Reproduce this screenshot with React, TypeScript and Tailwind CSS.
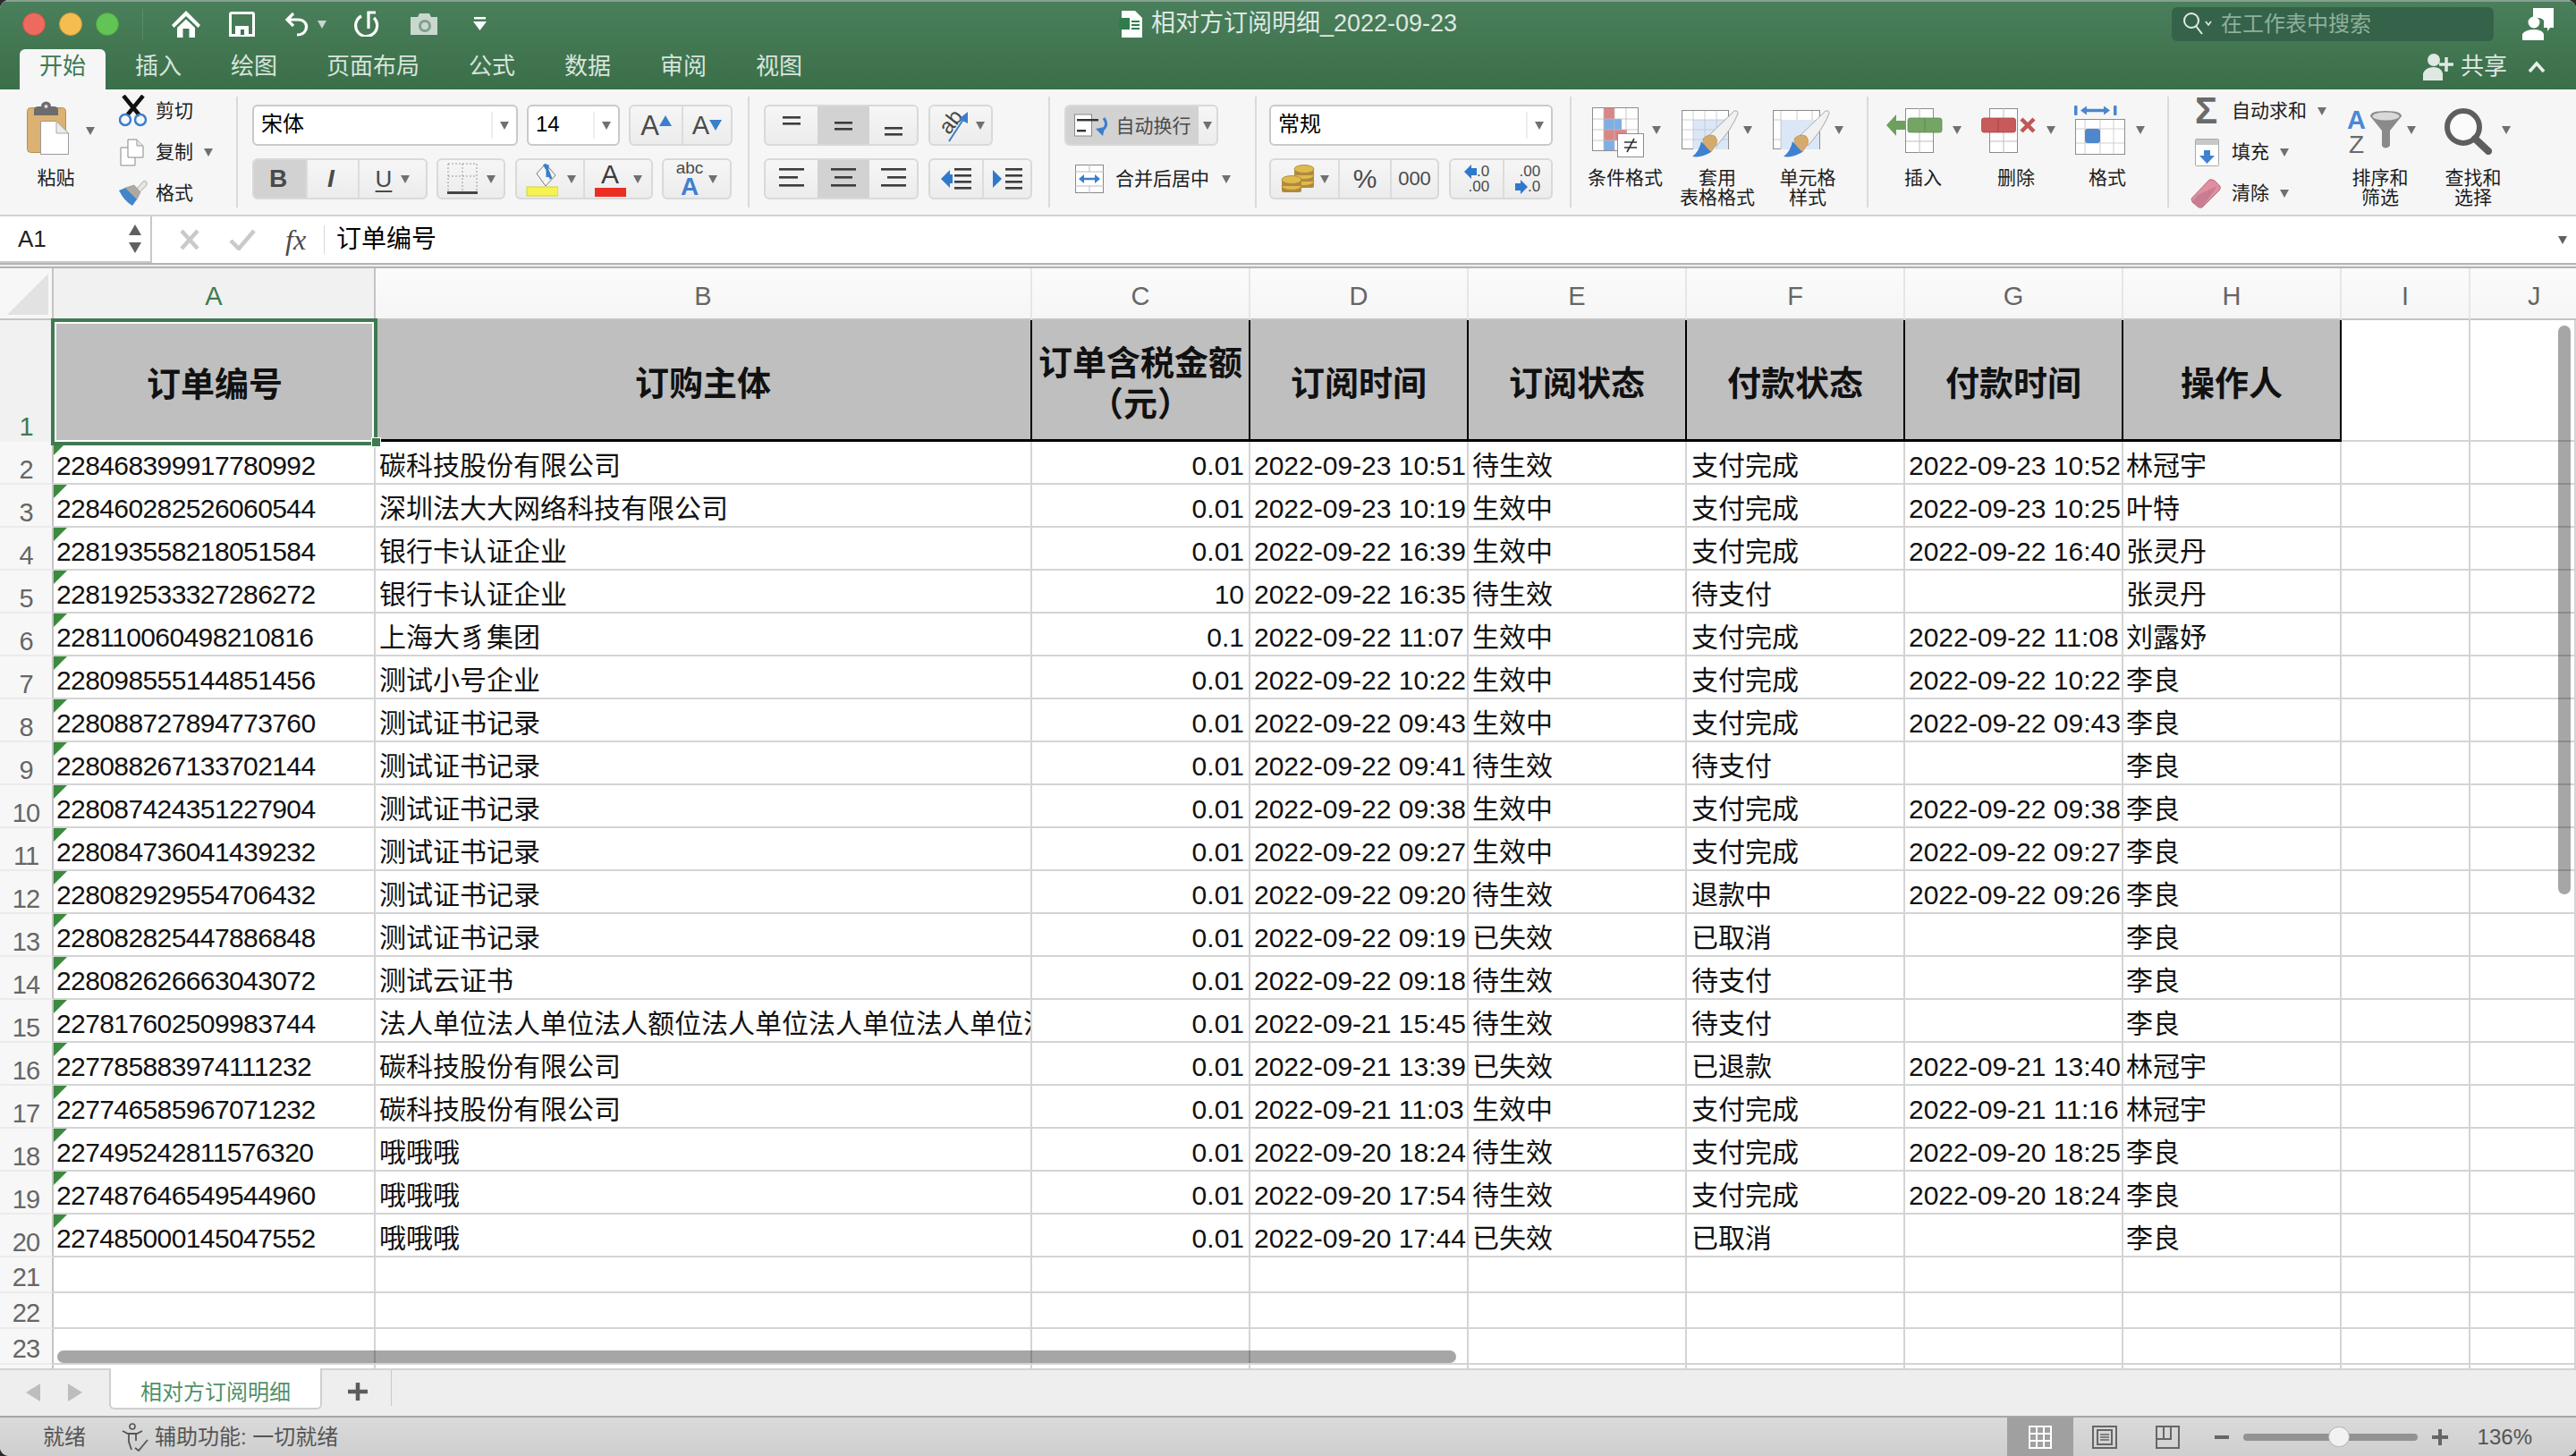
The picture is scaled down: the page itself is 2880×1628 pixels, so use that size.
import type { ReactNode } from 'react'

const ROWS: string[][] = [
  ['228468399917780992', '碳科技股份有限公司', '0.01', '2022-09-23 10:51', '待生效', '支付完成', '2022-09-23 10:52', '林冠宇'],
  ['228460282526060544', '深圳法大大网络科技有限公司', '0.01', '2022-09-23 10:19', '生效中', '支付完成', '2022-09-23 10:25', '叶特'],
  ['228193558218051584', '银行卡认证企业', '0.01', '2022-09-22 16:39', '生效中', '支付完成', '2022-09-22 16:40', '张灵丹'],
  ['228192533327286272', '银行卡认证企业', '10', '2022-09-22 16:35', '待生效', '待支付', '', '张灵丹'],
  ['228110060498210816', '上海大豸集团', '0.1', '2022-09-22 11:07', '生效中', '支付完成', '2022-09-22 11:08', '刘露妤'],
  ['228098555144851456', '测试小号企业', '0.01', '2022-09-22 10:22', '生效中', '支付完成', '2022-09-22 10:22', '李良'],
  ['228088727894773760', '测试证书记录', '0.01', '2022-09-22 09:43', '生效中', '支付完成', '2022-09-22 09:43', '李良'],
  ['228088267133702144', '测试证书记录', '0.01', '2022-09-22 09:41', '待生效', '待支付', '', '李良'],
  ['228087424351227904', '测试证书记录', '0.01', '2022-09-22 09:38', '生效中', '支付完成', '2022-09-22 09:38', '李良'],
  ['228084736041439232', '测试证书记录', '0.01', '2022-09-22 09:27', '生效中', '支付完成', '2022-09-22 09:27', '李良'],
  ['228082929554706432', '测试证书记录', '0.01', '2022-09-22 09:20', '待生效', '退款中', '2022-09-22 09:26', '李良'],
  ['228082825447886848', '测试证书记录', '0.01', '2022-09-22 09:19', '已失效', '已取消', '', '李良'],
  ['228082626663043072', '测试云证书', '0.01', '2022-09-22 09:18', '待生效', '待支付', '', '李良'],
  ['227817602509983744', '法人单位法人单位法人额位法人单位法人单位法人单位法人单位法', '0.01', '2022-09-21 15:45', '待生效', '待支付', '', '李良'],
  ['227785883974111232', '碳科技股份有限公司', '0.01', '2022-09-21 13:39', '已失效', '已退款', '2022-09-21 13:40', '林冠宇'],
  ['227746585967071232', '碳科技股份有限公司', '0.01', '2022-09-21 11:03', '生效中', '支付完成', '2022-09-21 11:16', '林冠宇'],
  ['227495242811576320', '哦哦哦', '0.01', '2022-09-20 18:24', '待生效', '支付完成', '2022-09-20 18:25', '李良'],
  ['227487646549544960', '哦哦哦', '0.01', '2022-09-20 17:54', '待生效', '支付完成', '2022-09-20 18:24', '李良'],
  ['227485000145047552', '哦哦哦', '0.01', '2022-09-20 17:44', '已失效', '已取消', '', '李良'],
]

const TABS = ['插入', '绘图', '页面布局', '公式', '数据', '审阅', '视图']
const COLS = ['B', 'C', 'D', 'E', 'F', 'G', 'H', 'I']
const HEADS = ['订购主体', '订单含税金额（元）', '订阅时间', '订阅状态', '付款状态', '付款时间', '操作人']
const CELL_PAD = ['pl-[3px]', 'pl-[4px]', 'justify-end pr-[5px]', 'pl-[4px]', 'pl-[4px]', 'pl-[5px]', 'pl-[4px]', 'pl-[3px]']
const GRID_LINE = 'border-r-2 border-b-2 border-[#d4d4d4]'

function Caret({ className = '', color = '#707070' }: { className?: string; color?: string }) {
  return (
    <svg width="10" height="10" viewBox="0 0 10 10" className={`shrink-0 ${className}`}>
      <polygon points="0,1 10,1 5,10" fill={color} />
    </svg>
  )
}

function Sep() {
  return <div className="w-[2px] h-[124px] mt-[8px] bg-[#dadada] shrink-0" />
}

function Seg({ className, children }: { className: string; children: ReactNode }) {
  return (
    <div className={`flex h-[46px] rounded-[6px] border-2 border-[#d9d9d9] bg-linear-to-b from-[#f6f6f6] to-[#ececec] overflow-hidden shrink-0 ${className}`}>
      {children}
    </div>
  )
}

function SegCell({ className, children }: { className: string; children?: ReactNode }) {
  return <div className={`flex items-center justify-center h-full leading-none text-[#4a4a4a] ${className}`}>{children}</div>
}

function Field({ className, text }: { className: string; text: string }) {
  return (
    <div className={`flex items-center justify-between h-[46px] pl-[8px] pr-[8px] bg-white rounded-[6px] border-2 border-[#c9c9c9] text-[24px] leading-[30px] text-black shrink-0 ${className}`}>
      <span className="pb-[3px]">{text}</span>
      <div className="flex items-center h-[30px] pl-[8px] border-l-2 border-[#eeeeee]">
        <Caret />
      </div>
    </div>
  )
}

function SmallRow({ icon, text, caret = false, iconClass = 'w-[44px]' }: { icon: ReactNode; text: string; caret?: boolean; iconClass?: string }) {
  return (
    <div className="flex items-center h-[46px] text-[21px] leading-[26px] text-[#1c1c1c]">
      <div className={`flex items-center shrink-0 ${iconClass}`}>{icon}</div>
      {text}
      {caret && <Caret className="ml-[12px]" />}
    </div>
  )
}

function BigButton({ className, rowClass, icon, lines, caretClass = 'ml-[8px] mt-[44px]' }: { className: string; rowClass: string; icon: ReactNode; lines: string[]; caretClass?: string }) {
  return (
    <div className={`flex flex-col shrink-0 ${className}`}>
      <div className={`flex items-start h-[88px] ${rowClass}`}>
        {icon}
        <Caret className={caretClass} />
      </div>
      <div className="flex flex-col items-center text-[21px] leading-[22px] text-[#1c1c1c]">
        {lines.map(l => <span key={l}>{l}</span>)}
      </div>
    </div>
  )
}

function PasteIcon() {
  return (
    <svg width="50" height="62" viewBox="9 7 50 62" className="shrink-0">
      <rect x="10.5" y="15.5" width="43" height="50" rx="4" fill="#dcb272" stroke="#b88d50" />
      <path d="M18 24 V18 Q18 14 23 14 H26 A5.5 5.5 0 0 1 37 14 H40 Q45 14 45 18 V24 Z" fill="#6c6c6c" />
      <circle cx="31.5" cy="14" r="2" fill="#dcdcdc" />
      <path d="M25.5 30.5 H43 L56.5 44 V67.5 H25.5 Z" fill="#fff" stroke="#9a9a9a" />
      <path d="M43 30.5 V44 H56.5 Z" fill="#ececec" stroke="#aaa" />
    </svg>
  )
}

function ScissorsIcon() {
  return (
    <svg width="34" height="36" viewBox="0 0 34 36">
      <path d="M6 1 L24 23 M28 1 L10 23" stroke="#111" strokeWidth="4.5" fill="none" />
      <circle cx="8" cy="28" r="6" fill="none" stroke="#3f7ecb" strokeWidth="2.5" />
      <circle cx="25" cy="28" r="6" fill="none" stroke="#3f7ecb" strokeWidth="2.5" />
    </svg>
  )
}

function CopyIcon() {
  return (
    <svg width="27" height="31" viewBox="0 0 27 31" className="ml-[2px]">
      <path d="M1 10 H17 V30 H1 Z" fill="#fff" stroke="#888" />
      <path d="M9 1 H19 L26 8 V21 H9 Z" fill="#fff" stroke="#888" />
      <path d="M19 1 V8 H26" fill="#e6e6e6" stroke="#999" />
    </svg>
  )
}

function FormatBrushIcon() {
  return (
    <svg width="33" height="30" viewBox="0 0 33 30">
      <path d="M20 11 L28 2 Q31 0 32 3 Q33 6 30 8 L23 15 Z" fill="#e6e6e6" stroke="#aaa" />
      <path d="M8 9 L18 6 L25 14 L21 22 Z" fill="#aeaaa3" stroke="#8f8c86" strokeWidth="0.6" />
      <path d="M1 12 L8 9 L21 22 L16 29 Q7 24 1 12 Z" fill="#4285c9" />
    </svg>
  )
}

function AlignLines({ y, x = [[1, 29], [1, 23], [1, 29]] }: { y: number[]; x?: number[][] }) {
  return (
    <svg width="30" height="36" viewBox="0 0 30 36">
      {y.map((v, i) => (
        <rect key={v} x={x[i][0]} y={v} width={x[i][1] - x[i][0]} height="2.6" fill="#3c3c3c" />
      ))}
    </svg>
  )
}

function IndentIcon({ dir }: { dir: 'l' | 'r' }) {
  return (
    <svg width="36" height="32" viewBox="0 0 36 32">
      <polygon points={dir === 'l' ? '1,16 11,6 11,26' : '12,16 2,6 2,26'} fill="#2f79cd" />
      <rect x={dir === 'l' ? 9 : 2} y="11" width="5" height="10" fill="#2f79cd" />
      <rect x="16" y="4" width="19" height="2.6" fill="#3c3c3c" />
      <rect x="16" y="11" width="19" height="2.6" fill="#3c3c3c" />
      <rect x="16" y="18" width="19" height="2.6" fill="#3c3c3c" />
      <rect x="16" y="25" width="19" height="2.6" fill="#3c3c3c" />
    </svg>
  )
}

function WrapIcon() {
  return (
    <svg width="40" height="26" viewBox="0 0 40 26">
      <rect x="0.5" y="1" width="19" height="24" fill="#fff" stroke="#888" />
      <rect x="3" y="6" width="24" height="2.4" fill="#333" />
      <rect x="3" y="18" width="10" height="2.4" fill="#333" />
      <path d="M33 5 Q39 13 31 19" fill="none" stroke="#3a7fcb" strokeWidth="3" />
      <polygon points="32,25 24,17 34,15" fill="#3a7fcb" />
    </svg>
  )
}

function MergeIcon() {
  return (
    <svg width="32" height="32" viewBox="0 0 32 32">
      <rect x="0.5" y="0.5" width="31" height="31" fill="#fff" stroke="#888" />
      <path d="M0 8 H32 M0 24 H32 M16 0 V8 M16 24 V32" stroke="#bbb" />
      <path d="M6 16 H26" stroke="#3a7fcb" strokeWidth="2.5" />
      <polygon points="4,16 10,11 10,21" fill="#3a7fcb" />
      <polygon points="28,16 22,11 22,21" fill="#3a7fcb" />
    </svg>
  )
}

function CoinsIcon() {
  const coin = (x: number, y: number) => (
    <g key={`${x}${y}`}>
      <rect x={x} y={y} width="22" height="7" rx="2" fill="#b08a3c" />
      <ellipse cx={x + 11} cy={y} rx="11" ry="4.5" fill="#e0b94f" stroke="#a9842f" strokeWidth="0.8" />
    </g>
  )
  return (
    <svg width="38" height="32" viewBox="0 0 38 32">
      {coin(15, 19)}{coin(15, 12)}{coin(15, 5)}
      {coin(1, 24)}{coin(1, 17)}
    </svg>
  )
}

function CondFormatIcon() {
  return (
    <svg width="58" height="56" viewBox="0 0 58 56" className="shrink-0">
      <rect x="0.5" y="0.5" width="51" height="48" fill="#fff" stroke="#8c8c8c" />
      <rect x="13" y="1" width="12" height="12" fill="#dc8585" />
      <rect x="13" y="13" width="20" height="12" fill="#7eaee6" />
      <rect x="13" y="25" width="26" height="12" fill="#dc8585" />
      <rect x="13" y="37" width="12" height="11" fill="#7eaee6" />
      <path d="M13 1 V48 M25 1 V48 M38 1 V48 M1 13 H51 M1 25 H51 M1 37 H51" stroke="#bdbdbd" strokeWidth="0.8" />
      <rect x="28.5" y="29.5" width="29" height="26" fill="#fff" stroke="#8c8c8c" />
      <path d="M36 39 H50 M36 45 H50 M39 50 L47 35" stroke="#333" strokeWidth="1.6" />
    </svg>
  )
}

function TableBrushIcon({ wide = false }: { wide?: boolean }) {
  return (
    <svg width="64" height="54" viewBox="0 0 64 54" className="shrink-0">
      <rect x="0.5" y="0.5" width="52" height="43" fill="#fff" stroke="#8c8c8c" />
      <rect x={wide ? 9 : 13} y={wide ? 11 : 11} width={wide ? 43 : 39} height="33" fill="#dbe7f6" />
      {wide ? (
        <path d="M9 1 V43 M1 11 H9 M1 33 H9 M44 1 V11 M27 1 V11" stroke="#bdbdbd" strokeWidth="0.8" />
      ) : (
        <path d="M13 1 V43 M26 1 V43 M39 1 V43 M1 11 H52 M1 22 H52 M1 33 H52" stroke="#bdc6d2" strokeWidth="0.8" />
      )}
      <path d="M29 30 L59 1 Q63 0 63 4 Q56 22 39 40 Z" fill="#f1f1f1" stroke="#a8a8a8" />
      <path d="M24 32 Q30 26 37 29 Q41 33 39 38 L33 47 Q24 44 24 32 Z" fill="#d6aa6c" stroke="#b18647" strokeWidth="0.6" />
      <path d="M22 35 Q28 42 33 47 Q22 54 12 52 Q20 46 22 35 Z" fill="#3f80d0" />
    </svg>
  )
}

function InsertIcon() {
  return (
    <svg width="63" height="51" viewBox="0 0 63 51" className="shrink-0">
      <rect x="21.5" y="0.5" width="31" height="49" fill="#fff" stroke="#8c8c8c" />
      <path d="M37 0 V50 M22 37 H52" stroke="#bdbdbd" />
      <rect x="24" y="11" width="38" height="16" rx="2.5" fill="#74a566" stroke="#5d8c52" strokeWidth="0.8" />
      <path d="M43 11 V27" stroke="#5d8c52" />
      <polygon points="0,19 11,7 11,14 21,14 21,24 11,24 11,31" fill="#6d9f5f" />
    </svg>
  )
}

function DeleteIcon() {
  return (
    <svg width="62" height="51" viewBox="0 0 62 51" className="shrink-0">
      <rect x="9.5" y="0.5" width="31" height="49" fill="#fff" stroke="#8c8c8c" />
      <path d="M25 0 V50 M10 37 H40" stroke="#bdbdbd" />
      <rect x="0.5" y="11" width="38" height="16" rx="2.5" fill="#c85a5a" stroke="#a84848" strokeWidth="0.8" />
      <path d="M19 11 V27" stroke="#a84848" />
      <path d="M45 12 L59 26 M59 12 L45 26" stroke="#c15656" strokeWidth="4.5" />
    </svg>
  )
}

function CellFormatIcon() {
  return (
    <svg width="58" height="55" viewBox="0 0 58 55" className="shrink-0">
      <rect x="0" y="0" width="3.5" height="11" rx="1" fill="#4a86cc" />
      <rect x="44" y="0" width="3.5" height="11" rx="1" fill="#4a86cc" />
      <path d="M9 5.5 H38" stroke="#4a86cc" strokeWidth="3.5" />
      <polygon points="7,5.5 14,0.5 14,10.5" fill="#4a86cc" />
      <polygon points="40,5.5 33,0.5 33,10.5" fill="#4a86cc" />
      <rect x="1.5" y="15.5" width="55" height="39" fill="#fff" stroke="#8c8c8c" />
      <path d="M12 16 V54 M29 16 V54 M44 16 V54 M2 26 H56 M2 42 H56" stroke="#cfcfcf" />
      <rect x="12" y="26" width="17" height="16" rx="3" fill="#4f87ce" />
    </svg>
  )
}

function SumIcon() {
  return (
    <svg width="30" height="34" viewBox="0 0 30 34" className="overflow-visible">
      <text x="0" y="31" fontSize="42" fontFamily="Liberation Sans" fontWeight="700" fill="#6a6a6a">Σ</text>
    </svg>
  )
}

function FillIcon() {
  return (
    <svg width="27" height="31" viewBox="0 0 27 31" className="ml-[5px]">
      <rect x="0.5" y="0.5" width="26" height="30" rx="1" fill="#fff" stroke="#a8a8a8" />
      <rect x="1" y="1" width="25" height="6" fill="#c8c8c8" />
      <rect x="10" y="13" width="7" height="7" fill="#3f80d0" />
      <polygon points="5,19 22,19 13.5,28" fill="#3f80d0" />
    </svg>
  )
}

function EraserIcon() {
  return (
    <svg width="34" height="33" viewBox="0 0 34 33">
      <path d="M1 22 L21 1 Q24 0 27 2 L33 8 Q34 11 32 13 L13 32 Q10 33 8 31 L2 26 Z" fill="#e08ea2" stroke="#a9596d" strokeWidth="0.8" />
      <path d="M8 18 L30 8 L13 32 L8 31 L2 26 Z" fill="#c97d91" />
    </svg>
  )
}

function SortIcon() {
  return (
    <svg width="62" height="50" viewBox="0 0 62 50" className="shrink-0 overflow-visible">
      <text x="0" y="22" fontSize="29" fontFamily="Liberation Sans" fontWeight="700" fill="#4c87d6">A</text>
      <text x="2" y="49" fontSize="28" fontFamily="Liberation Sans" fill="#6a6a6a">Z</text>
      <path d="M26 8 Q26 2 43 2 Q61 2 61 8 L48 24 V41 Q43 46 39 41 V24 Z" fill="#8a8a8a" />
      <ellipse cx="43.5" cy="8" rx="15" ry="4.5" fill="#d9d9d9" />
    </svg>
  )
}

function SearchBigIcon() {
  return (
    <svg width="54" height="53" viewBox="0 0 54 53" className="shrink-0">
      <circle cx="22" cy="22" r="18" fill="#fff" fillOpacity="0.6" stroke="#5e5e5e" strokeWidth="6" />
      <path d="M35 35 L50 49" stroke="#5e5e5e" strokeWidth="8" strokeLinecap="round" />
    </svg>
  )
}

function TitleBar() {
  return (
    <div className="h-[100px] shrink-0 flex flex-col bg-linear-to-b from-[#4a7f5b] to-[#3a6f49] border-t-2 border-[#86a190]">
      <div className="grid grid-cols-[1fr_auto_1fr] h-[54px] pb-[4px]">
        <div className="flex items-center pl-[25px]">
          <div className="w-[26px] h-[26px] rounded-full bg-[#ee6a5f] border border-[#c9544b]" />
          <div className="w-[26px] h-[26px] rounded-full bg-[#f5bd4f] border border-[#d19e3a] ml-[15px]" />
          <div className="w-[26px] h-[26px] rounded-full bg-[#61c454] border border-[#4ea643] ml-[15px]" />
          <div className="w-[1px] h-[34px] bg-[#5b8a6b] ml-[26px]" />
          <svg width="32" height="30" viewBox="0 0 32 30" className="ml-[32px]">
            <path d="M16 0 L32 16 L29.5 19 L16 6 L2.5 19 L0 16 Z M6 19 L16 9.5 L26 19 V30 H19.5 V20 H12.5 V30 H6 Z" fill="#fff" />
          </svg>
          <svg width="29" height="28" viewBox="0 0 29 28" className="ml-[32px]">
            <path d="M3 1.5 H26 Q27.5 1.5 27.5 3 V26.5 H1.5 V3 Q1.5 1.5 3 1.5 Z" fill="none" stroke="#fff" strokeWidth="3" />
            <rect x="7" y="16" width="15" height="11" fill="#fff" />
            <rect x="13" y="20" width="4" height="6" fill="#3f7450" />
          </svg>
          <svg width="29" height="28" viewBox="0 0 29 28" className="ml-[33px]">
            <path d="M10 2 L3 9 L10 16 M3 9 H15 C23 9 26 15 24 20 C22 25 18 26 14 26" fill="none" stroke="#fff" strokeWidth="3.2" />
          </svg>
          <Caret className="ml-[8px]" color="#c9d8ce" />
          <svg width="29" height="29" viewBox="0 0 29 29" className="ml-[30px]">
            <path d="M9 6 A12 12 0 1 0 23 8" fill="none" stroke="#fff" strokeWidth="3.2" />
            <path d="M17 20 V2 H25" fill="none" stroke="#fff" strokeWidth="3.2" />
          </svg>
          <svg width="32" height="24" viewBox="0 0 32 24" className="ml-[34px]">
            <path d="M1 4 H9 L11 0 H22 L24 4 H31 V24 H1 Z" fill="#c9d8ce" />
            <circle cx="17" cy="14" r="7" fill="#7f9f8b" />
            <circle cx="17" cy="14" r="4" fill="#c9d8ce" />
          </svg>
          <svg width="15" height="15" viewBox="0 0 15 15" className="ml-[39px]">
            <rect x="1" y="0" width="13" height="2.5" fill="#fff" />
            <polygon points="0,5 15,5 7.5,15" fill="#fff" />
          </svg>
        </div>
        <div className="flex items-center text-[27px] text-[#dfe8e2]">
          <svg width="26" height="30" viewBox="0 0 26 30" className="mr-[10px]">
            <path d="M3 0 H18 L26 8 V30 H3 Z" fill="#fff" />
            <rect x="0" y="8" width="12" height="13" fill="#2f7d4c" />
            <path d="M14 12 H23 M14 16 H23 M14 20 H23" stroke="#2f7d4c" strokeWidth="2" />
          </svg>
          相对方订阅明细_2022-09-23
        </div>
        <div className="flex items-center justify-end">
          <div className="flex items-center w-[360px] h-[38px] rounded-[6px] bg-[#35634a] pl-[12px] text-[24px] text-[#8fb09b]">
            <svg width="34" height="28" viewBox="0 0 34 28" className="mr-[9px]">
              <circle cx="10" cy="10" r="8" fill="none" stroke="#e4ece7" strokeWidth="2" />
              <path d="M15 16 L22 25" stroke="#e4ece7" strokeWidth="2" />
              <path d="M26 11 L29 15 L32 11" fill="none" stroke="#e4ece7" strokeWidth="1.6" />
            </svg>
            在工作表中搜索
          </div>
          <svg width="36" height="36" viewBox="0 0 36 36" className="ml-[32px] mr-[24px]">
            <path d="M12 0 H35 V22 L31 22 L28 26 V22 H24 V14 Q21 10 12 11 Z" fill="#fff" />
            <circle cx="13" cy="16" r="6.5" fill="#fff" />
            <path d="M0 36 V29 Q4 24 13 24 Q22 24 24 29 V36 Z" fill="#fff" />
          </svg>
        </div>
      </div>
      <div className="flex justify-between flex-1">
        <div className="flex gap-[11px] pl-[22px] text-[26px] text-[#d8e4dc]">
          <div className="flex items-center pb-[6px] px-[22px] rounded-t-[6px] bg-[#f6f6f6] text-[#3f7a52]">开始</div>
          {TABS.map(t => <div key={t} className="flex items-center pb-[6px] px-[22px]">{t}</div>)}
        </div>
        <div className="flex items-center pb-[6px] text-[26px] text-[#dfe8e2] pr-[34px]">
          <svg width="34" height="30" viewBox="0 0 34 30" className="mr-[8px]">
            <circle cx="12" cy="7" r="7" fill="#dfe8e2" />
            <path d="M0 30 V22 Q3 15 12 15 Q20 15 22 22 V30 Z" fill="#dfe8e2" />
            <path d="M26 4 V20 M18 12 H34" stroke="#dfe8e2" strokeWidth="3.5" />
          </svg>
          共享
          <svg width="20" height="14" viewBox="0 0 20 14" className="ml-[23px]">
            <path d="M2 12 L10 3 L18 12" fill="none" stroke="#e8efea" strokeWidth="3.5" />
          </svg>
        </div>
      </div>
    </div>
  )
}

function Ribbon() {
  return (
    <div className="h-[142px] shrink-0 flex bg-[#f6f6f6] border-b-2 border-[#d2d2d2]">
      <div className="w-[264px] flex shrink-0">
        <BigButton
          className="w-[125px]"
          rowClass="pl-[29px] pt-[12px]"
          icon={<PasteIcon />}
          caretClass="ml-[17px] mt-[29px]"
          lines={['粘贴']}
        />
        <div className="flex flex-col pt-[1px] pl-[7px]">
          <SmallRow icon={<ScissorsIcon />} text="剪切" iconClass="w-[42px]" />
          <SmallRow icon={<CopyIcon />} text="复制" caret iconClass="w-[42px]" />
          <SmallRow icon={<FormatBrushIcon />} text="格式" iconClass="w-[42px]" />
        </div>
      </div>
      <Sep />

      <div className="w-[570px] shrink-0 flex flex-col gap-[14px] pt-[17px] pl-[16px]">
        <div className="flex gap-[10px]">
          <Field className="w-[297px]" text="宋体" />
          <Field className="w-[104px]" text="14" />
          <Seg className="w-[116px]">
            <SegCell className="w-[57px] text-[31px]">
              A<svg width="14" height="12" viewBox="0 0 14 12" className="mb-[10px]"><polygon points="7,0 14,12 0,12" fill="#3a7fcb" /></svg>
            </SegCell>
            <SegCell className="flex-1 border-l-2 border-[#dcdcdc] text-[29px]">
              A<svg width="14" height="12" viewBox="0 0 14 12"><polygon points="0,0 14,0 7,12" fill="#3a7fcb" /></svg>
            </SegCell>
          </Seg>
        </div>
        <div className="flex">
          <Seg className="w-[196px]">
            <SegCell className="w-[58px] pr-[4px] bg-[#d2d2d2] text-[28px] font-bold">B</SegCell>
            <SegCell className="w-[58px] pr-[4px] border-l-2 border-[#dcdcdc] text-[28px] italic font-bold">I</SegCell>
            <SegCell className="flex-1 border-l-2 border-[#dcdcdc] text-[26px] gap-[10px]">
              <span className="underline underline-offset-[4px]">U</span>
              <Caret />
            </SegCell>
          </Seg>
          <Seg className="w-[77px] ml-[10px]">
            <SegCell className="w-full gap-[10px]">
              <svg width="34" height="38" viewBox="0 0 34 38">
                <path d="M1 2 H33 M1 16 H33 M1 2 V32 M33 2 V32 M17 2 V32" stroke="#9a9a9a" strokeDasharray="2 2" fill="none" />
                <rect x="0" y="33" width="34" height="3" fill="#444" />
              </svg>
              <Caret />
            </SegCell>
          </Seg>
          <Seg className="w-[154px] ml-[11px]">
            <SegCell className="w-[74px] gap-[10px] pl-[2px]">
              <svg width="36" height="40" viewBox="0 0 36 40">
                <path d="M12 14 L22 3 L33 16 L22 28 Z" fill="#f5f5f5" stroke="#7a7a7a" />
                <path d="M24 4 V18 M20 4 Q24 8 28 20" stroke="#3a7fcb" strokeWidth="3" fill="none" />
                <rect x="1" y="29" width="35" height="10" fill="#f6f24f" stroke="#d4cf3a" />
              </svg>
              <Caret />
            </SegCell>
            <SegCell className="flex-1 border-l-2 border-[#dcdcdc] gap-[8px]">
              <div className="flex flex-col items-center text-[30px] leading-[30px] text-[#3c3c3c]">
                A
                <div className="w-[35px] h-[10px] bg-[#ea2e21]" />
              </div>
              <Caret />
            </SegCell>
          </Seg>
          <Seg className="w-[78px] ml-[10px]">
            <SegCell className="w-full gap-[6px]">
              <div className="flex flex-col items-center text-[19px] leading-[18px]">
                abc
                <span className="text-[28px] leading-[24px] font-bold text-[#3f80d0]">A</span>
              </div>
              <Caret />
            </SegCell>
          </Seg>
        </div>
      </div>
      <Sep />

      <div className="w-[334px] shrink-0 flex flex-col gap-[14px] pt-[17px] pl-[16px]">
        <div className="flex">
          <Seg className="w-[173px]">
            <SegCell className="w-[58px]"><AlignLines y={[8, 15]} x={[[5, 25], [5, 25]]} /></SegCell>
            <SegCell className="w-[58px] bg-[#d2d2d2]"><AlignLines y={[14, 21]} x={[[5, 25], [5, 25]]} /></SegCell>
            <SegCell className="flex-1"><AlignLines y={[20, 27]} x={[[5, 25], [5, 25]]} /></SegCell>
          </Seg>
          <Seg className="w-[72px] ml-[11px]">
            <SegCell className="w-full gap-[6px]">
              <svg width="38" height="40" viewBox="0 0 38 40" className="overflow-visible">
                <text x="5" y="27" fontSize="24" fontFamily="Liberation Sans" fill="#444" transform="rotate(-52 14 20)">ab</text>
                <path d="M14 38 L31 12" stroke="#3a7fcb" strokeWidth="2" />
                <polygon points="35,5 35,18 25,13" fill="#3a7fcb" />
              </svg>
              <Caret />
            </SegCell>
          </Seg>
        </div>
        <div className="flex">
          <Seg className="w-[173px]">
            <SegCell className="w-[58px]"><AlignLines y={[6, 15, 24]} x={[[1, 29], [1, 22], [1, 29]]} /></SegCell>
            <SegCell className="w-[58px] bg-[#d2d2d2]"><AlignLines y={[6, 15, 24]} x={[[1, 29], [5, 25], [1, 29]]} /></SegCell>
            <SegCell className="flex-1"><AlignLines y={[6, 15, 24]} x={[[1, 29], [8, 29], [1, 29]]} /></SegCell>
          </Seg>
          <Seg className="w-[116px] ml-[11px]">
            <SegCell className="w-[58px]"><IndentIcon dir="l" /></SegCell>
            <SegCell className="flex-1 border-l-2 border-[#dcdcdc]"><IndentIcon dir="r" /></SegCell>
          </Seg>
        </div>
      </div>
      <Sep />

      <div className="w-[229px] shrink-0 flex flex-col gap-[14px] pt-[17px] pl-[16px]">
        <Seg className="w-[172px]">
          <SegCell className="w-[148px] bg-[#d2d2d2] gap-[7px] text-[21px] text-[#1c1c1c]">
            <WrapIcon />
            自动换行
          </SegCell>
          <SegCell className="flex-1"><Caret /></SegCell>
        </Seg>
        <div className="flex items-center h-[46px] pl-[12px] text-[21px] leading-[26px] text-[#1c1c1c]">
          <MergeIcon />
          <span className="ml-[13px]">合并后居中</span>
          <Caret className="ml-[14px]" />
        </div>
      </div>
      <Sep />

      <div className="w-[350px] shrink-0 flex flex-col gap-[14px] pt-[17px] pl-[14px]">
        <Field className="w-[317px]" text="常规" />
        <div className="flex">
          <Seg className="w-[190px]">
            <SegCell className="w-[75px] gap-[6px]"><CoinsIcon /><Caret /></SegCell>
            <SegCell className="w-[58px] border-l-2 border-[#dcdcdc] text-[30px]">%</SegCell>
            <SegCell className="flex-1 border-l-2 border-[#dcdcdc] text-[22px]">000</SegCell>
          </Seg>
          <Seg className="w-[116px] ml-[11px]">
            <SegCell className="w-[58px] text-[17px]">
              <div className="flex flex-col items-end leading-[17px]">
                <div className="flex items-center">
                  <svg width="14" height="16" viewBox="0 0 14 16"><polygon points="0,8 8,0 8,4 14,4 14,12 8,12 8,16" fill="#2f79cd" /></svg>
                  .0
                </div>
                .00
              </div>
            </SegCell>
            <SegCell className="flex-1 border-l-2 border-[#dcdcdc] text-[17px]">
              <div className="flex flex-col items-end leading-[17px]">
                .00
                <div className="flex items-center">
                  <svg width="14" height="16" viewBox="0 0 14 16"><polygon points="14,8 6,0 6,4 0,4 0,12 6,12 6,16" fill="#2f79cd" /></svg>
                  .0
                </div>
              </div>
            </SegCell>
          </Seg>
        </div>
      </div>
      <Sep />

      <div className="w-[330px] shrink-0 flex pl-[13px]">
        <BigButton className="w-[94px]" rowClass="pl-[10px] pt-[20px]" icon={<CondFormatIcon />} lines={['条件格式']} caretClass="ml-[9px] mt-[20px]" />
        <BigButton className="w-[100px] ml-[6px]" rowClass="pl-[10px] pt-[23px]" icon={<TableBrushIcon />} lines={['套用', '表格格式']} caretClass="ml-[5px] mt-[17px]" />
        <BigButton className="w-[100px] ml-[1px]" rowClass="pl-[11px] pt-[23px]" icon={<TableBrushIcon wide />} lines={['单元格', '样式']} caretClass="ml-[5px] mt-[17px]" />
      </div>
      <Sep />

      <div className="w-[334px] shrink-0 flex pl-[15px]">
        <BigButton className="w-[92px]" rowClass="pl-[5px] pt-[21px]" icon={<InsertIcon />} lines={['插入']} caretClass="ml-[11px] mt-[19px]" />
        <BigButton className="w-[92px] ml-[12px]" rowClass="pl-[7px] pt-[21px]" icon={<DeleteIcon />} lines={['删除']} caretClass="ml-[11px] mt-[19px]" />
        <BigButton className="w-[92px] ml-[10px]" rowClass="pl-[9px] pt-[18px]" icon={<CellFormatIcon />} lines={['格式']} caretClass="ml-[11px] mt-[22px]" />
      </div>
      <Sep />

      <div className="flex-1 flex pl-[24px]">
        <div className="w-[168px] shrink-0 flex flex-col pt-[1px]">
          <SmallRow icon={<SumIcon />} text="自动求和" caret iconClass="w-[46px] pl-[5px]" />
          <SmallRow icon={<FillIcon />} text="填充" caret iconClass="w-[46px]" />
          <SmallRow icon={<EraserIcon />} text="清除" caret iconClass="w-[46px]" />
        </div>
        <BigButton className="w-[92px] ml-[-2px]" rowClass="pl-[9px] pt-[22px]" icon={<SortIcon />} lines={['排序和', '筛选']} caretClass="ml-[5px] mt-[18px]" />
        <BigButton className="w-[92px] ml-[12px]" rowClass="pl-[13px] pt-[20px]" icon={<SearchBigIcon />} lines={['查找和', '选择']} caretClass="ml-[11px] mt-[20px]" />
      </div>
    </div>
  )
}

function FormulaBar() {
  return (
    <div className="h-[58px] shrink-0 flex flex-col bg-white">
      <div className="flex items-center h-[52px]">
        <div className="flex items-center justify-between w-[170px] h-full pl-[20px] pr-[10px] border-r-2 border-[#c8c8c8] border-b-2 text-[26px] text-[#222]">
          A1
          <div className="flex flex-col gap-[8px]">
            <svg width="14" height="12" viewBox="0 0 14 12"><polygon points="7,0 14,12 0,12" fill="#606060" /></svg>
            <svg width="14" height="12" viewBox="0 0 14 12"><polygon points="0,0 14,0 7,12" fill="#606060" /></svg>
          </div>
        </div>
        <svg width="24" height="24" viewBox="0 0 24 24" className="ml-[30px]">
          <path d="M3 2 L21 22 M21 2 L3 22" stroke="#c9c9c9" strokeWidth="4.5" />
        </svg>
        <svg width="30" height="24" viewBox="0 0 30 24" className="ml-[32px]">
          <path d="M2 13 L11 22 L28 2" fill="none" stroke="#c9c9c9" strokeWidth="4.5" />
        </svg>
        <span className="ml-[33px] w-[43px] text-[32px] italic font-['Liberation_Serif',serif] text-[#4a4a4a]">fx</span>
        <div className="w-[1px] h-[32px] bg-[#d8d8d8]" />
        <span className="ml-[13px] text-[28px] text-black">订单编号</span>
        <Caret className="ml-auto mr-[10px]" color="#606060" />
      </div>
      <div className="h-[6px] border-y-2 border-[#b4b4b4] bg-[#ececec]" />
    </div>
  )
}

function Grid() {
  return (
    <div className="relative flex-1 min-h-0 overflow-hidden bg-white">
      <div className="grid grid-cols-[60px_360px_734px_244px_244px_244px_244px_244px_244px_144px_118px] grid-rows-[58px_136px_repeat(19,48px)_repeat(4,40px)] text-[30px] text-[#111]">
        <div className="flex items-end justify-end bg-[#f7f7f7] border-r-2 border-b-2 border-[#c4c4c4] p-[4px]">
          <div className="w-[46px] h-[46px] bg-[#e2e2e2] [clip-path:polygon(100%_0,100%_100%,0_100%)]" />
        </div>
        <div className="flex items-center justify-center pt-[8px] bg-[#f1f1f1] border-r-2 border-b-2 border-[#c4c4c4] text-[29px] text-[#3f7a52]">A</div>
        {COLS.map(c => (
          <div key={c} className="flex items-center justify-center pt-[8px] bg-linear-to-b from-[#fbfbfb] to-[#f6f6f6] border-r-2 border-[#e6e6e6] border-b-2 border-b-[#c4c4c4] text-[29px] text-[#666]">{c}</div>
        ))}
        <div className="flex items-center justify-start pt-[8px] pl-[64px] bg-linear-to-b from-[#fbfbfb] to-[#f6f6f6] border-b-2 border-b-[#c4c4c4] text-[29px] text-[#666]">J</div>

        <div className="flex items-end justify-center pb-[2px] bg-[#f1f1f1] border-r-2 border-[#c4c4c4] text-[29px] leading-[30px] tracking-[-1px] text-[#3f7a52]">1</div>
        <div className="relative flex items-center justify-center pt-[8px] bg-[#bfbfbf] text-[38px] font-bold">
          订单编号
          <div className="absolute -left-[3px] -top-[2px] -right-[2px] -bottom-[4px] border-[4px] border-[#3f7a52] z-10">
            <div className="w-full h-full border-2 border-white" />
          </div>
          <div className="absolute -right-[6px] -bottom-[6px] w-[11px] h-[11px] bg-[#3f7a52] border border-white z-20" />
        </div>
        {HEADS.map(h => (
          <div key={h} className="flex items-center justify-center pt-[8px] text-center bg-[#bfbfbf] border-r-2 border-b-[3px] border-r-black border-b-black text-[38px] leading-[46px] font-bold">
            {h === '订单含税金额（元）' ? (
              <span className="whitespace-nowrap">订单含税金额<br />（元）</span>
            ) : h}
          </div>
        ))}
        <div className={GRID_LINE} />
        <div className={GRID_LINE} />

        {ROWS.map((row, i) => (
          <div key={row[0]} className="contents">
            <div className="flex items-center justify-center pt-[16px] bg-[#f7f7f7] border-r-2 border-r-[#c4c4c4] border-b-2 border-b-[#ebebeb] text-[29px] leading-[30px] tracking-[-1px] text-[#666]">{i + 2}</div>
            {row.map((text, j) => (
              <div key={j} className={`relative flex items-center pt-[8px] overflow-hidden whitespace-nowrap leading-[34px] ${GRID_LINE} ${CELL_PAD[j]}`}>
                {j === 0 && (
                  <svg width="15" height="15" viewBox="0 0 15 15" className="absolute left-0 top-0">
                    <polygon points="0,0 15,0 0,15" fill="#3b8a3e" />
                  </svg>
                )}
                <span className={j === 0 ? 'tracking-[-0.6px]' : ''}>{text}</span>
              </div>
            ))}
            <div className={GRID_LINE} />
            <div className={GRID_LINE} />
          </div>
        ))}

        {[21, 22, 23, 24].map(n => (
          <div key={n} className="contents">
            <div className="flex items-center justify-center pt-[6px] bg-[#f7f7f7] border-r-2 border-r-[#c4c4c4] border-b-2 border-b-[#ebebeb] text-[29px] leading-[30px] tracking-[-1px] text-[#666]">{n === 24 ? '' : n}</div>
            {Array.from({ length: 10 }).map((_, j) => <div key={j} className={GRID_LINE} />)}
          </div>
        ))}
      </div>

      <div className="absolute left-[64px] top-[1210px] w-[1564px] h-[14px] rounded-full bg-black/35" />
      <div className="absolute left-[2860px] top-[64px] w-[14px] h-[636px] rounded-full bg-black/35" />
    </div>
  )
}

function SheetTabs() {
  return (
    <div className="h-[53px] shrink-0 flex bg-[#eeeeee] border-t-2 border-[#d2d2d2] pb-[7px]">
      <svg width="16" height="20" viewBox="0 0 16 20" className="ml-[29px] mt-[15px]"><polygon points="16,0 16,20 0,10" fill="#bdbdbd" /></svg>
      <svg width="16" height="20" viewBox="0 0 16 20" className="ml-[31px] mt-[15px]"><polygon points="0,0 0,20 16,10" fill="#bdbdbd" /></svg>
      <div className="w-[238px] ml-[30px] -mt-[2px] pt-[10px] flex items-center justify-center rounded-b-[6px] bg-white border-x-2 border-b-2 border-[#cfcfcf] text-[24px] leading-[30px] text-[#4f9168]">
        相对方订阅明细
      </div>
      <svg width="22" height="20" viewBox="0 0 22 20" className="ml-[29px] mt-[14px]">
        <path d="M11 0 V20 M0 10 H22" stroke="#5c5c5c" strokeWidth="4.5" />
      </svg>
      <div className="w-[1px] h-[40px] bg-[#c8c8c8] ml-[26px]" />
    </div>
  )
}

function StatusBar() {
  return (
    <div className="h-[45px] shrink-0 flex items-center bg-linear-to-b from-[#dadada] to-[#cfcfcf] border-t-2 border-[#a6a6a6] text-[24px] leading-[30px] text-[#555]">
      <span className="ml-[48px]">就绪</span>
      <svg width="30" height="32" viewBox="0 0 30 32" className="ml-[40px]">
        <circle cx="12" cy="4" r="3" fill="none" stroke="#555" strokeWidth="1.6" />
        <path d="M1 9 L7 12 H17 L23 9 M8 12 V21 L11 30 M16 12 V20 M15 28 L19 31 L29 19" fill="none" stroke="#555" strokeWidth="1.8" />
      </svg>
      <span className="ml-[7px]">辅助功能: 一切就绪</span>
      <div className="ml-auto flex items-center h-full bg-[#a0a0a0] w-[74px] justify-center">
        <svg width="26" height="26" viewBox="0 0 26 26">
          <rect x="1" y="1" width="24" height="24" fill="#a0a0a0" stroke="#fff" strokeWidth="2" />
          <path d="M9 1 V25 M17 1 V25 M1 9 H25 M1 17 H25" stroke="#fff" strokeWidth="2" />
        </svg>
      </div>
      <svg width="28" height="26" viewBox="0 0 28 26" className="ml-[21px]">
        <rect x="1" y="1" width="26" height="24" fill="none" stroke="#666" strokeWidth="2" />
        <rect x="6" y="5" width="16" height="16" fill="none" stroke="#666" strokeWidth="2" />
        <path d="M9 10 H19 M9 13 H19 M9 16 H19" stroke="#666" strokeWidth="1.6" />
      </svg>
      <svg width="27" height="26" viewBox="0 0 27 26" className="ml-[43px]">
        <rect x="1" y="1" width="25" height="24" fill="none" stroke="#666" strokeWidth="2" />
        <path d="M1 15 H17 V1 M9 1 V15" fill="none" stroke="#666" strokeWidth="2" />
      </svg>
      <div className="w-[16px] h-[4px] bg-[#666] ml-[39px]" />
      <div className="flex items-center w-[195px] h-[8px] rounded-full bg-[#929292] ml-[16px]">
        <div className="w-[24px] h-[23px] rounded-full bg-[#f2f2f2] border border-[#b0b0b0] ml-[95px]" />
      </div>
      <svg width="18" height="18" viewBox="0 0 18 18" className="ml-[16px]">
        <path d="M9 0 V18 M0 9 H18" stroke="#666" strokeWidth="4" />
      </svg>
      <span className="ml-[33px] mr-[49px]">136%</span>
    </div>
  )
}

export default function App() {
  return (
    <div className="w-[2880px] h-[1628px] bg-[#2b2b2b] font-['Liberation_Sans','Noto_Sans_CJK_SC',sans-serif]">
      <div className="w-full h-full flex flex-col rounded-[10px] overflow-hidden bg-white">
        <TitleBar />
        <Ribbon />
        <FormulaBar />
        <Grid />
        <SheetTabs />
        <StatusBar />
      </div>
    </div>
  )
}
